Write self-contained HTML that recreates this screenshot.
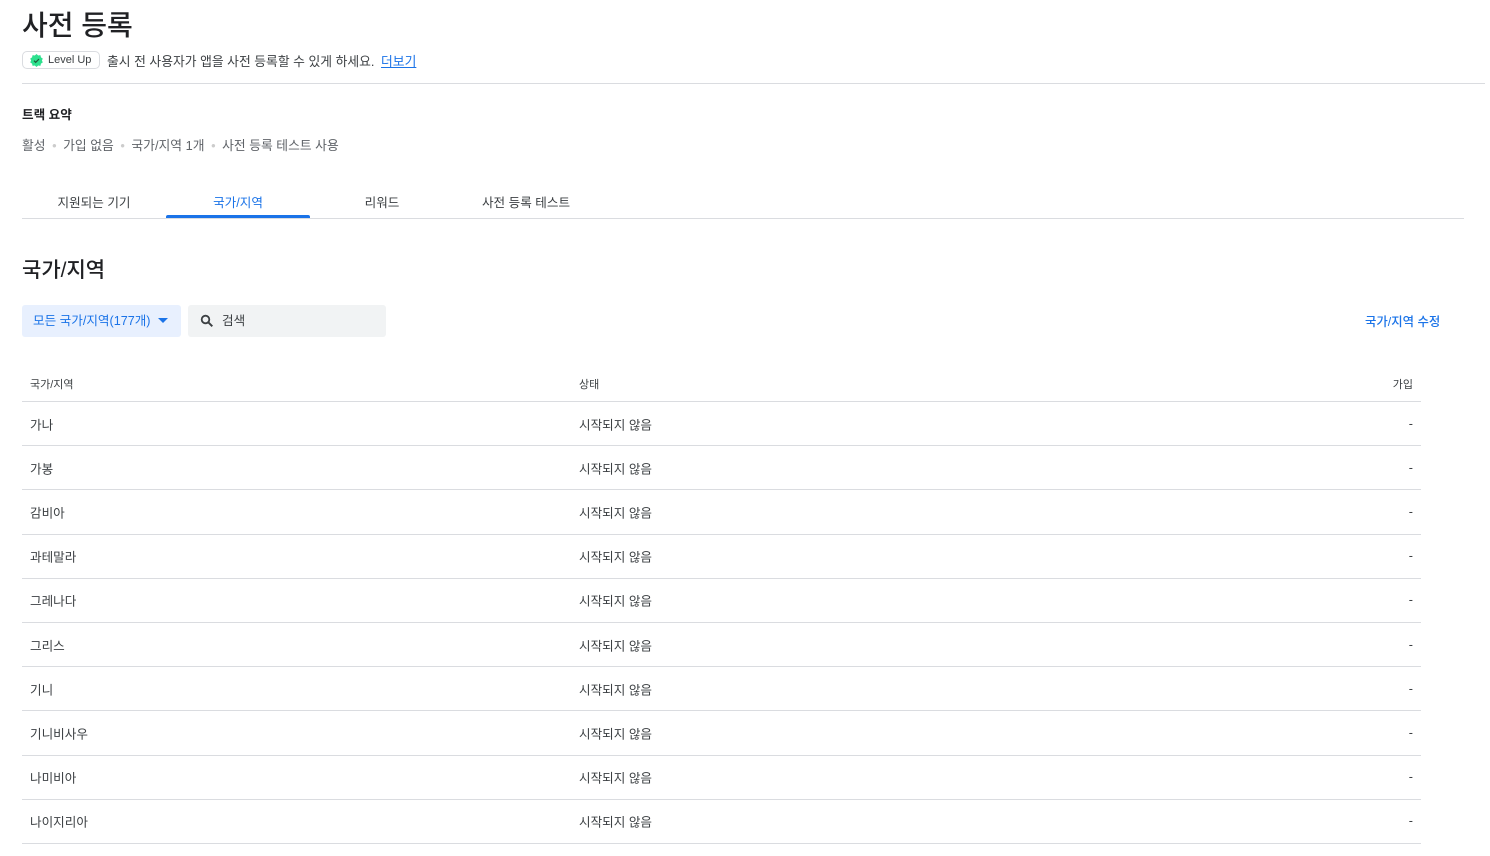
<!DOCTYPE html>
<html><head><meta charset="utf-8"><style>
*{margin:0;padding:0;box-sizing:border-box}
body{width:1490px;height:856px;overflow:hidden;background:#fff;font-family:"Liberation Sans","Noto Sans CJK KR",sans-serif;color:#202124;position:relative}
.a{position:absolute;white-space:nowrap}
.row{position:absolute;left:22px;width:1399px;height:44.2px;border-bottom:1px solid #dadce0;font-size:12.6px;color:#3c4043}
.row span{position:absolute;top:50%;transform:translateY(-50%)}
</style></head><body>
<div class="a" style="left:22px;top:4px;font-size:28px;font-weight:500;">사전 등록</div>
<div class="a" style="left:22px;top:51px;height:18px;width:78px;border:1px solid #dadce0;border-radius:5px;font-size:11px;line-height:16px;padding-left:25px;color:#3c4043">Level Up
<svg style="position:absolute;left:7px;top:1.5px" width="13" height="13" viewBox="0 0 14 14"><polygon points="7,0 8.8,1.6 11.2,1.2 11.8,3.6 13.8,5 12.8,7 13.8,9 11.8,10.4 11.2,12.8 8.8,12.4 7,14 5.2,12.4 2.8,12.8 2.2,10.4 0.2,9 1.2,7 0.2,5 2.2,3.6 2.8,1.2 5.2,1.6" fill="#2de08e"/><path d="M4.3 7.2l1.8 1.8 3.6-3.6" stroke="#1e5c3a" stroke-width="1.3" fill="none"/></svg></div>
<div class="a" style="left:107px;top:51px;font-size:12.8px;color:#3c4043">출시 전 사용자가 앱을 사전 등록할 수 있게 하세요. <span style="color:#1a73e8;text-decoration:underline;margin-left:3px">더보기</span></div>
<div class="a" style="left:22px;top:83px;width:1463px;height:1px;background:#dadce0"></div>
<div class="a" style="left:22px;top:104px;font-size:12.6px;font-weight:700">트랙 요약</div>
<div class="a" style="left:22px;top:135px;font-size:12.8px;color:#5f6368">활성 <span style="color:#ccc;margin:0 3px">•</span> 가입 없음 <span style="color:#ccc;margin:0 3px">•</span> 국가/지역 1개 <span style="color:#ccc;margin:0 3px">•</span> 사전 등록 테스트 사용</div>
<div class="a" style="left:22px;top:218px;width:1442px;height:1px;background:#dadce0"></div>
<div class="a" style="left:22px;top:192px;width:144px;text-align:center;font-size:12.6px;color:#3c4043">지원되는 기기</div>
<div class="a" style="left:166px;top:192px;width:144px;text-align:center;font-size:12.6px;color:#1a73e8">국가/지역</div>
<div class="a" style="left:166px;top:215px;width:144px;height:3px;background:#1a73e8;border-radius:2px 2px 0 0"></div>
<div class="a" style="left:310px;top:192px;width:144px;text-align:center;font-size:12.6px;color:#3c4043">리워드</div>
<div class="a" style="left:454px;top:192px;width:144px;text-align:center;font-size:12.6px;color:#3c4043">사전 등록 테스트</div>
<div class="a" style="left:22px;top:254px;font-size:21px;font-weight:500">국가/지역</div>
<div class="a" style="left:22px;top:305px;width:159px;height:32px;background:#e8f0fe;border-radius:3px;font-size:12.6px;line-height:32px;padding-left:11px;color:#1a73e8">모든 국가/지역(177개)<svg style="position:absolute;left:136px;top:13px" width="10" height="6"><path d="M0 0h10L5 5z" fill="#1a73e8"/></svg></div>
<div class="a" style="left:188px;top:305px;width:198px;height:32px;background:#f1f3f4;border-radius:3px;font-size:12.6px;line-height:32px;padding-left:34px;color:#3c4043">검색<svg style="position:absolute;left:12px;top:9px" width="14" height="14" viewBox="0 0 14 14"><circle cx="5.5" cy="5.5" r="3.8" stroke="#3c4043" stroke-width="1.8" fill="none"/><path d="M8.3 8.3l4 4" stroke="#3c4043" stroke-width="2"/></svg></div>
<div class="a" style="left:1365px;top:312px;font-size:12.4px;color:#1a73e8;font-weight:500">국가/지역 수정</div>
<div class="row" style="top:358px;"><span style="left:8px;font-size:11px;top:61%">국가/지역</span><span style="left:557px;font-size:11px;top:61%">상태</span><span style="right:8px;font-size:11px;top:61%">가입</span></div>
<div class="row" style="top:402px"><span style="left:8px">가나</span><span style="left:557px">시작되지 않음</span><span style="right:8px">-</span></div>
<div class="row" style="top:446.2px"><span style="left:8px">가봉</span><span style="left:557px">시작되지 않음</span><span style="right:8px">-</span></div>
<div class="row" style="top:490.4px"><span style="left:8px">감비아</span><span style="left:557px">시작되지 않음</span><span style="right:8px">-</span></div>
<div class="row" style="top:534.6px"><span style="left:8px">과테말라</span><span style="left:557px">시작되지 않음</span><span style="right:8px">-</span></div>
<div class="row" style="top:578.8px"><span style="left:8px">그레나다</span><span style="left:557px">시작되지 않음</span><span style="right:8px">-</span></div>
<div class="row" style="top:623px"><span style="left:8px">그리스</span><span style="left:557px">시작되지 않음</span><span style="right:8px">-</span></div>
<div class="row" style="top:667.2px"><span style="left:8px">기니</span><span style="left:557px">시작되지 않음</span><span style="right:8px">-</span></div>
<div class="row" style="top:711.4px"><span style="left:8px">기니비사우</span><span style="left:557px">시작되지 않음</span><span style="right:8px">-</span></div>
<div class="row" style="top:755.6px"><span style="left:8px">나미비아</span><span style="left:557px">시작되지 않음</span><span style="right:8px">-</span></div>
<div class="row" style="top:799.8px"><span style="left:8px">나이지리아</span><span style="left:557px">시작되지 않음</span><span style="right:8px">-</span></div>
</body></html>
